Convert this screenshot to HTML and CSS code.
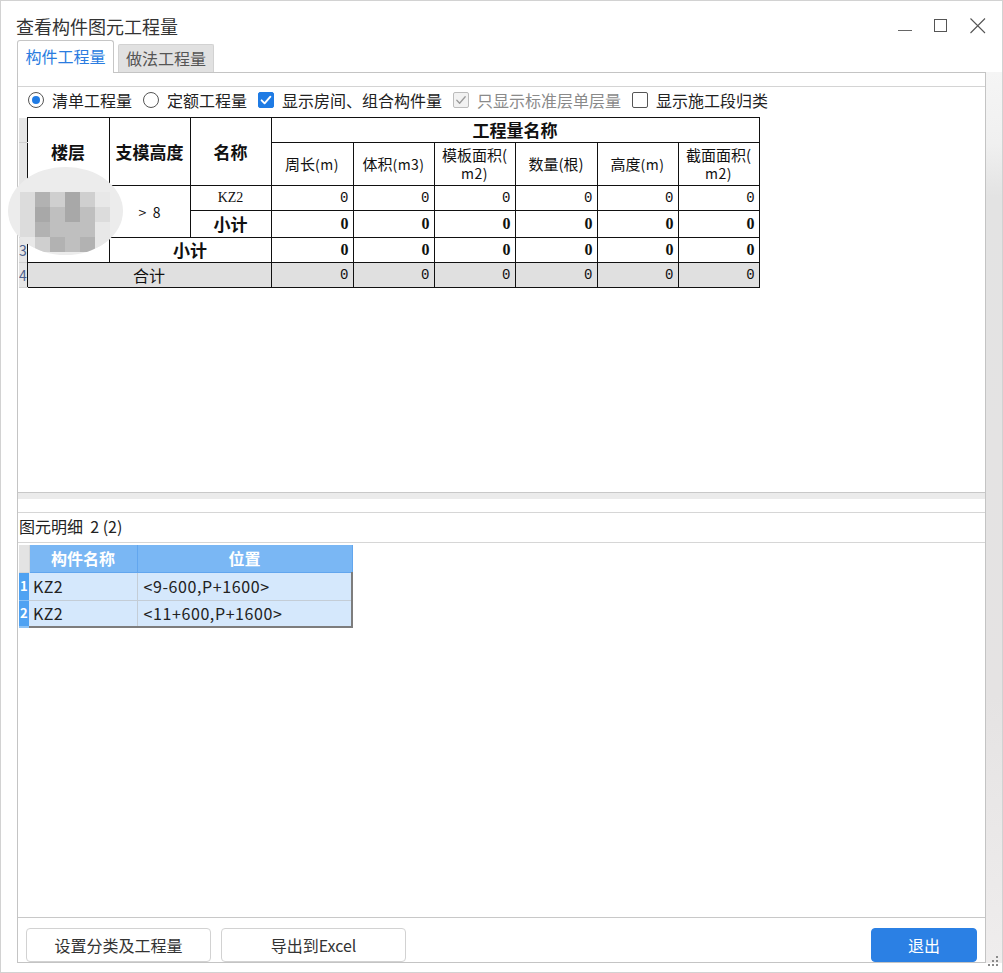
FILE: index.html
```html
<!DOCTYPE html>
<html lang="zh-CN">
<head>
<meta charset="utf-8">
<title>查看构件图元工程量</title>
<link rel="stylesheet" href="styles.css">
</head>
<body>
<div class="window">
  <div class="titlebar">
    <div class="title">查看构件图元工程量</div>
    <div class="controls">
      <svg class="ctl" width="16" height="16" viewBox="0 0 16 16"><path d="M1 12.5h14" stroke="#666" stroke-width="1" fill="none"/></svg>
      <svg class="ctl" width="16" height="16" viewBox="0 0 16 16"><rect x="1.5" y="1.5" width="12" height="12" stroke="#555" stroke-width="1" fill="none"/></svg>
      <svg class="ctl" width="17" height="16" viewBox="0 0 17 16"><path d="M1.5 0.5l14.5 14.5M16 0.5l-14.5 14.5" stroke="#555" stroke-width="1.1" fill="none"/></svg>
    </div>
  </div>

  <div class="tabs">
    <div class="tab active">构件工程量</div>
    <div class="tab">做法工程量</div>
  </div>

  <div class="frame">
    <div class="panel">
      <div class="group">
        <div class="options">
          <div class="opt"><span class="radio on"></span><span>清单工程量</span></div>
          <div class="opt"><span class="radio"></span><span>定额工程量</span></div>
          <div class="opt"><span class="cb on"><svg width="16" height="16" viewBox="0 0 16 16"><path d="M3.6 8.3l3 3 5.8-6.6" stroke="#fff" stroke-width="1.9" fill="none" stroke-linecap="round" stroke-linejoin="round"/></svg></span><span>显示房间、组合构件量</span></div>
          <div class="opt dis"><span class="cb dim"><svg width="16" height="16" viewBox="0 0 16 16"><path d="M3.8 8.3l2.8 2.9 5.6-6.4" stroke="#9a9a9a" stroke-width="1.3" fill="none" stroke-linecap="round" stroke-linejoin="round"/></svg></span><span>只显示标准层单层量</span></div>
          <div class="opt"><span class="cb"></span><span>显示施工段归类</span></div>
        </div>
        <div class="upper">
          <table class="qty">
            <colgroup>
              <col class="w-rn"><col class="w82"><col class="w81"><col class="w81">
              <col class="w82"><col class="w81"><col class="w81"><col class="w82"><col class="w81"><col class="w81">
            </colgroup>
            <tr class="h1">
              <td class="rn"></td>
              <th rowspan="2">楼层</th>
              <th rowspan="2">支模高度</th>
              <th rowspan="2">名称</th>
              <th colspan="6">工程量名称</th>
            </tr>
            <tr class="h2">
              <td class="rn"></td>
              <th class="sub">周长<span class="u">(m)</span></th>
              <th class="sub">体积<span class="u">(m3)</span></th>
              <th class="sub two">模板面积(<br><span class="u">m2)</span></th>
              <th class="sub">数量(根)</th>
              <th class="sub">高度<span class="u">(m)</span></th>
              <th class="sub two">截面面积(<br><span class="u">m2)</span></th>
            </tr>
            <tr class="r1">
              <td class="rn"></td>
              <td rowspan="3" class="floor"></td>
              <td rowspan="2" class="ctr gt">&gt;&nbsp; 8</td>
              <td class="ctr kz">KZ2</td>
              <td class="num">0</td><td class="num">0</td><td class="num">0</td><td class="num">0</td><td class="num">0</td><td class="num">0</td>
            </tr>
            <tr class="r2">
              <td class="rn"></td>
              <td class="ctr bold">小计</td>
              <td class="num bnum">0</td><td class="num bnum">0</td><td class="num bnum">0</td><td class="num bnum">0</td><td class="num bnum">0</td><td class="num bnum">0</td>
            </tr>
            <tr class="r3">
              <td class="rn">3</td>
              <td colspan="2" class="ctr bold">小计</td>
              <td class="num bnum">0</td><td class="num bnum">0</td><td class="num bnum">0</td><td class="num bnum">0</td><td class="num bnum">0</td><td class="num bnum">0</td>
            </tr>
            <tr class="r4 total">
              <td class="rn">4</td>
              <td colspan="3" class="ctr sum">合计</td>
              <td class="num">0</td><td class="num">0</td><td class="num">0</td><td class="num">0</td><td class="num">0</td><td class="num">0</td>
            </tr>
          </table>
        </div>
      </div>

      <div class="splitter"></div>

      <div class="detail-label">图元明细&nbsp; 2 (2)</div>
      <div class="grid-area">
        <table class="grid">
          <colgroup><col class="g-rn"><col class="g-c1"><col class="g-c2"></colgroup>
          <tr class="gh"><th class="grn"></th><th>构件名称</th><th>位置</th></tr>
          <tr class="gr"><td class="grn">1</td><td class="nm">KZ2</td><td class="pos">&lt;9-600,P+1600&gt;</td></tr>
          <tr class="gr last"><td class="grn">2</td><td class="nm">KZ2</td><td class="pos">&lt;11+600,P+1600&gt;</td></tr>
        </table>
      </div>

      <div class="buttons">
        <div class="btn b1">设置分类及工程量</div>
        <div class="btn b2">导出到Excel</div>
        <div class="btn primary">退出</div>
      </div>
    </div>
    <div class="strip"></div>
  </div>

  <div class="blur">
    <div class="mosaic">
      <span class="g2"></span><span class="g5"></span><span class="g3"></span><span class="g6"></span><span class="g3"></span><span class="g1"></span>
      <span class="g2"></span><span class="g6"></span><span class="g4"></span><span class="g6"></span><span class="g4"></span><span class="g2"></span>
      <span class="g2"></span><span class="g5"></span><span class="g4"></span><span class="g4"></span><span class="g4"></span><span class="g1"></span>
      <span class="g1"></span><span class="g3"></span><span class="g5"></span><span class="g4"></span><span class="g5"></span><span class="g1"></span>
    </div>
  </div>

  <svg class="grip" width="14" height="14" viewBox="0 0 14 14">
    <rect x="10" y="1" width="2" height="2" fill="#8a8a8a"/>
    <rect x="6" y="5" width="2" height="2" fill="#8a8a8a"/><rect x="10" y="5" width="2" height="2" fill="#8a8a8a"/>
    <rect x="2" y="9" width="2" height="2" fill="#8a8a8a"/><rect x="6" y="9" width="2" height="2" fill="#8a8a8a"/><rect x="10" y="9" width="2" height="2" fill="#8a8a8a"/>
  </svg>
</div>
</body>
</html>
```

FILE: styles.css
```css
* { box-sizing: border-box; margin: 0; padding: 0; }
html, body { width: 1003px; height: 973px; overflow: hidden; background: #fff; }
body {
  font-family: "Noto Sans CJK SC", "Noto Sans", sans-serif;
  font-size: 16px;
  color: #333;
}

.window {
  position: relative;
  width: 1003px;
  height: 973px;
  border: 1px solid #d2d2d2;
  background: #fff;
}

/* title bar */
.titlebar {
  height: 39px;
  display: flex;
  justify-content: space-between;
  align-items: flex-start;
}
.title {
  font-size: 18px;
  line-height: 24px;
  padding: 13px 0 0 15px;
  color: #333;
}
.controls {
  display: flex;
  align-items: flex-start;
  padding: 17px 16px 0 0;
  gap: 20px;
}
.controls .ctl { display: block; }

/* tabs */
.tabs {
  height: 33px;
  margin: 0 0 -1px 16px;
  display: flex;
  align-items: flex-end;
  position: relative;
  z-index: 2;
}
.tab {
  font-size: 16px;
  text-align: center;
}
.tab.active {
  width: 97px;
  height: 33px;
  line-height: 31px;
  background: #fff;
  border: 1px solid #c6c6c6;
  border-bottom: none;
  border-radius: 3px 3px 0 0;
  color: #2a7ce0;
}
.tab:not(.active) {
  width: 96px;
  height: 28px;
  line-height: 27px;
  margin: 0 0 1px 4px;
  background: #e1e1e1;
  border: 1px solid #d2d2d2;
  border-bottom: none;
  border-radius: 2px 2px 0 0;
  color: #555;
}

/* frame */
.frame {
  display: flex;
  height: 891px;
}
.panel {
  width: 969px;
  margin-left: 16px;
  border: 1px solid #c4c4c4;
  display: flex;
  flex-direction: column;
}
.strip {
  flex: 1;
  background: linear-gradient(#f5f5f5 0, #f0f0f0 8%, #e3e3e3 14%, #e5e3e3 70%, #efeded 100%);
}

.group {
  margin-top: 13px;
  border-top: 1px solid #d4d4d4;
}
.options {
  height: 26px;
  display: flex;
  align-items: center;
  padding-left: 10px;
  color: #222;
  font-size: 16px;
}
.opt {
  display: flex;
  align-items: center;
  margin-right: 11px;
  line-height: 20px;
}
.opt.dis { color: #8a8a8a; }
.radio, .cb {
  width: 16px;
  height: 16px;
  margin-right: 8px;
  flex: none;
  position: relative;
}
.radio {
  border: 1px solid #555;
  border-radius: 50%;
  background: #fff;
}
.radio.on::after {
  content: "";
  position: absolute;
  left: 3px; top: 3px;
  width: 8px; height: 8px;
  border-radius: 50%;
  background: #1f7be4;
}
.cb {
  border: 1px solid #555;
  border-radius: 2px;
  background: #fff;
}
.cb svg { position: absolute; left: -1px; top: -1px; }
.cb.on { background: #1f7be4; border-color: #1f7be4; }
.cb.dim { background: #f2f2f2; border-color: #bcbcbc; }

.upper {
  height: 380px;
  border-bottom: 1px solid #c8c8c8;
  padding: 4px 0 0 1px;
}

/* quantity table */
.qty {
  border-collapse: collapse;
  table-layout: fixed;
  width: 740px;
  font-size: 16px;
  color: #111;
}
.w-rn { width: 8px; }
.w82 { width: 82px; }
.w81 { width: 81px; }
.qty th, .qty td {
  border: 1px solid #111;
  padding: 0;
  overflow: hidden;
  white-space: nowrap;
}
.qty th {
  font-weight: 700;
  font-size: 17px;
  line-height: 20px;
}
.qty th.sub {
  font-weight: 400;
  font-size: 15px;
  line-height: 18px;
}
.qty th .u { font-size: 14px; letter-spacing: 0.5px; }
.qty .h1 { height: 25px; }
.qty .h2 { height: 43px; }
.qty .r1 { height: 25px; }
.qty .r2 { height: 27px; }
.qty .r3 { height: 25px; }
.qty .r4 { height: 25px; }
.qty td.rn {
  border: none;
  border-bottom: 1px solid #d0d0d0;
  background: #e6e6e6;
  color: #4b5f8c;
  font-size: 14px;
  line-height: 16px;
  text-align: left;
  padding-left: 0;
  vertical-align: middle;
}
.qty .ctr { text-align: center; }
.qty .kz {
  font-family: "Liberation Serif", serif;
  font-size: 14px;
  line-height: 18px;
}
.qty .gt { font-size: 14px; }
.qty .bold { font-weight: 700; font-size: 17px; line-height: 20px; }
.qty .sum { font-size: 16px; line-height: 20px; }
.qty .num {
  text-align: right;
  padding-right: 4px;
  font-family: "Liberation Mono", monospace;
  font-size: 14px;
  line-height: 18px;
}
.qty .bnum {
  font-family: "Liberation Serif", serif;
  font-weight: 700;
  font-size: 16px;
}
.qty .total td:not(.rn) { background: #e0e0e0; }

/* splitter */
.splitter {
  height: 6px;
  background: #ebebeb;
  margin-bottom: 13px;
}

/* lower detail */
.detail-label {
  height: 31px;
  border-top: 1px solid #d6d6d6;
  border-bottom: 1px solid #d6d6d6;
  padding: 1px 0 0 1px;
  line-height: 24px;
  font-size: 16px;
  color: #222;
}
.grid-area {
  height: 375px;
  border-bottom: 1px solid #c8c8c8;
  padding: 2px 0 0 1px;
}
.grid {
  border-collapse: collapse;
  table-layout: fixed;
  width: 333px;
  font-size: 16px;
  color: #222;
}
.g-rn { width: 10px; }
.g-c1 { width: 108px; }
.g-c2 { width: 215px; }
.grid th, .grid td {
  padding: 0;
  white-space: nowrap;
  overflow: hidden;
}
.grid .gh { height: 27px; }
.grid .gh th {
  background: #7ab7f4;
  color: #fff;
  font-weight: 700;
  font-size: 16px;
  line-height: 20px;
  border-right: 1px solid #62a6ee;
  border-bottom: 1px solid #62a6ee;
}
.grid .gh th.grn { background: #e3e3e3; border-color: #d6d6d6; }
.grid .gr { height: 28px; }
.grid .gr.last { height: 27px; }
.grid .gr td {
  background: #d5e8fc;
  border-right: 1px solid #c4cdd6;
  border-bottom: 1px solid #c4cdd6;
  padding-left: 4px;
  line-height: 20px;
}
.grid .gr td.nm { letter-spacing: 0.4px; }
.grid .gr td.pos { padding-left: 6px; letter-spacing: 0.6px; border-right: 2px solid #7d7d7d; }
.grid .gr.last td { border-bottom: 2px solid #7d7d7d; }
.grid .gr td.grn {
  background: #4fa2f2;
  color: #fff;
  font-weight: 700;
  font-size: 13px;
  padding-left: 1px;
  letter-spacing: 0;
  border-right: none;
  border-bottom: 1px solid #8cc2f5;
}
.grid .gr.last td.grn { border-bottom: 2px solid #8cc2f5; }

/* buttons */
.buttons {
  height: 44px;
  padding: 10px 8px 0 8px;
  display: flex;
  align-items: flex-start;
}
.btn {
  height: 34px;
  border: 1px solid #d2d2d2;
  border-radius: 4px;
  background: #fff;
  font-size: 16px;
  line-height: 32px;
  text-align: center;
  color: #333;
}
.btn.b1 { width: 185px; }
.btn.b2 { width: 185px; margin-left: 10px; }
.btn.primary {
  width: 106px;
  margin-left: auto;
  background: #2b80e4;
  border-color: #2b80e4;
  color: #fff;
}

/* blurred mosaic overlay */
.blur {
  position: absolute;
  left: 7px;
  top: 166px;
  width: 115px;
  height: 88px;
  border-radius: 50%;
  background: #ececec;
  overflow: hidden;
  z-index: 3;
}
.mosaic {
  position: absolute;
  left: 12px;
  top: 25px;
  display: grid;
  grid-template-columns: repeat(6, 15px);
  grid-auto-rows: 15px;
}
.mosaic .g1 { background: #e8e8e8; }
.mosaic .g2 { background: #dcdcdc; }
.mosaic .g3 { background: #cfcfcf; }
.mosaic .g4 { background: #bfbfbf; }
.mosaic .g5 { background: #b2b2b2; }
.mosaic .g6 { background: #a8a8a8; }

.grip {
  position: absolute;
  right: 2px;
  bottom: 3px;
}
```
